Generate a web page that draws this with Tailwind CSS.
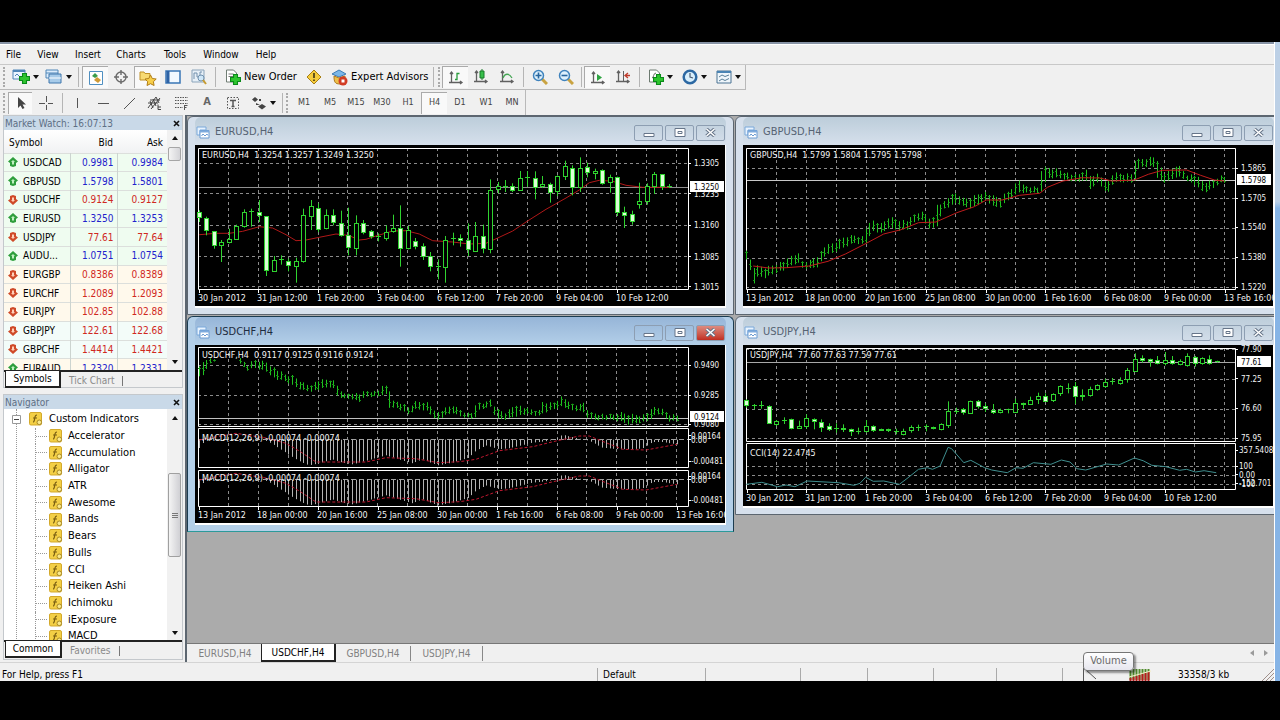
<!DOCTYPE html>
<html lang="en">
<head>
<meta charset="utf-8">
<title>Trading Terminal</title>
<script src="https://cdn.jsdelivr.net/npm/@tailwindcss/browser@4"></script>
</head>
<body class="h-screen overflow-hidden bg-black pt-[42px] pb-[39px] font-['DejaVu_Sans_Condensed','Noto_Sans',sans-serif] text-[10px] text-black">

<svg class="hidden">
  <symbol id="plus" viewBox="0 0 10 10"><path d="M3.2 .5h3.6v2.7h2.7v3.6H6.800v2.700H3.200V6.800H.5V3.200h2.700z" fill="#2fc52f" stroke="#0a8a1a"/></symbol>
  <symbol id="caret" viewBox="0 0 6 4"><path d="M0 0h6L3 4z" fill="#111"/></symbol>
  <symbol id="up" viewBox="0 0 10 10"><path d="M5 0l5 4.500-2 1.500v3l-3 1-3-1V6L0 4.500z" fill="#2e9e3c"/><path d="M5 3l2 2H6v2.500H4V5H3z" fill="#bff0c0"/></symbol>
  <symbol id="down" viewBox="0 0 10 10"><path d="M5 10L0 5.500 2 4V1l3-1 3 1v3l2 1.500z" fill="#cf4a28"/><path d="M5 7L3 5h1V2.500h2V5h1z" fill="#ffd0b8"/></symbol>
  <symbol id="fx" viewBox="0 0 14 14"><rect x=".5" y=".5" width="12" height="12.500" rx="1.500" fill="#f3cf45" stroke="#d3a92c"/><path d="M8 3c-2 0-2 1.500-2.300 3.500S5.200 10 4 10M4 6h4" fill="none" stroke="#7a5f12" stroke-width="1.200"/><circle cx="10.300" cy="10.300" r="2.300" fill="#fbe98c" stroke="#a88a28"/></symbol>
  <symbol id="win" viewBox="0 0 14 14"><path d="M1 1h9v3H4v5H1z" fill="#e8f3ff" stroke="#7ba9da"/><path d="M4 4.500h9V12H4z" fill="#fff" stroke="#6b9bd2"/><path d="M4 5.500h9" stroke="#7fabdc" stroke-width="2"/><path d="M5.500 10l1.500-2 2 2 2-2 1 1.500" fill="none" stroke="#6b9bd2"/></symbol>
  <symbol id="axes" viewBox="0 0 16 16"><path d="M3.500 2v11M1 12.500h13M2 4l1.500-2L5 4M12 11l2 1.500-2 1.500" fill="none" stroke="#606060" stroke-width="1.300"/></symbol>
</svg>

<div class="flex h-full">
<div class="flex min-w-0 flex-1 flex-col border-t-2 border-[#8793a5] bg-[#f0f0f0]">

  <nav class="flex h-5 items-center border-t border-white text-[10px]">
    <button class="w-[27px]">File</button><button class="w-[42px]">View</button><button class="w-[38px]">Insert</button><button class="w-[48px]">Charts</button><button class="w-[40px]">Tools</button><button class="w-[52px]">Window</button><button class="w-[38px]">Help</button>
  </nav>

  <div class="flex h-[26px] items-stretch border-t border-[#c8c8c8]">
   <div class="flex items-center border-r border-b border-[#b9b9b9]">
    <span class="mr-[3px] ml-[3px] h-5 w-[3px] border-l-2 border-dotted border-[#aaa]"></span>
    <button aria-label="New chart" class="flex w-8 items-center justify-center gap-[3px]"><svg class="size-[18px]" viewBox="0 0 18 18"><path d="M1 2h12v9H1z" fill="#eaf5ff" stroke="#4f86b8"/><path d="M1 3h12" stroke="#4f86b8" stroke-width="2"/><path d="M3 8l2-2 2 2" fill="none" stroke="#4f86b8"/><use href="#plus" x="7" y="5" width="11" height="11"/></svg><svg class="h-1 w-[6px]"><use href="#caret"/></svg></button>
    <button aria-label="Profiles" class="flex w-[34px] items-center justify-center gap-[3px]"><svg class="size-[18px]" viewBox="0 0 18 18"><path d="M1 2h12v8H1z" fill="#dcecfb" stroke="#4f86b8"/><path d="M1 5h12" stroke="#4f86b8"/><path d="M4 6h12v9H4z" fill="#a7cbe9" stroke="#3f76ac"/><path d="M4 10h12" stroke="#fff"/></svg><svg class="h-1 w-[6px]"><use href="#caret"/></svg></button>
    <span class="mx-[3px] h-5 border-l border-[#b5b5b5]"></span>
    <button aria-label="Market watch" class="flex h-[22px] w-[26px] items-center justify-center border-t border-l border-[#aaa] bg-[#f9f9f9]"><svg class="size-4" viewBox="0 0 16 16"><path d="M1.500 1.500h13v13h-13z" fill="#fff" stroke="#4f8fc0"/><path d="M4 6l3-3 3 3-3 2z" fill="#3a9c4a"/><path d="M6 10l3-3 4 3-3 3z" fill="#cf9a35"/></svg></button>
    <button aria-label="Data window" class="flex w-[26px] items-center justify-center"><svg class="size-4" viewBox="0 0 16 16" fill="none" stroke="#6a6a6a" stroke-width="1.400"><circle cx="8" cy="8" r="5"/><path d="M8 1v5M8 10v5M1 8h5M10 8h5"/></svg></button>
    <button aria-label="Navigator" class="flex h-[22px] w-[26px] items-center justify-center border-t border-l border-[#aaa] bg-[#f9f9f9]"><svg class="h-4 w-[18px]" viewBox="0 0 18 16"><path d="M1 2h4l1 1.500h5V10H1z" fill="#f8da72" stroke="#bf9128"/><path d="M11.500 5l1.800 3.500 3.900.500-2.800 2.700.7 3.800-3.600-1.800L8 15.500l.7-3.800L6 9l3.800-.5z" fill="#f8cf4a" stroke="#b07d18"/></svg></button>
    <button aria-label="Terminal" class="flex w-[26px] items-center justify-center"><svg class="size-4" viewBox="0 0 16 16"><path d="M1 2h14v12H1z" fill="#f2f9ff" stroke="#3875b5" stroke-width="1.500"/><path d="M3 2v12" stroke="#2d62a5" stroke-width="3"/></svg></button>
    <button aria-label="Tester" class="flex w-[26px] items-center justify-center"><svg class="size-4" viewBox="0 0 16 16"><path d="M1 1h12v12H1z" fill="#e6eff7" stroke="#8ba4ba"/><path d="M3 10V4h3v4h3V3h2" fill="none" stroke="#7390ac"/><circle cx="10" cy="9" r="3" fill="#cfe7f8" stroke="#7191ae"/><path d="M12 11l3 4" stroke="#c79c32" stroke-width="2"/></svg></button>
    <span class="mx-[3px] h-5 border-l border-[#b5b5b5]"></span>
    <button class="flex w-[82px] items-center gap-[3px] pl-[6px]"><svg class="size-4 shrink-0" viewBox="0 0 16 16"><path d="M1.500 1h7l3 3v9h-10z" fill="#fff" stroke="#707d74"/><path d="M3.500 5h5M3.500 7.500h5" stroke="#777"/><use href="#plus" x="5" y="5" width="11" height="11"/></svg><span class="text-[11px] whitespace-nowrap">New Order</span></button>
    <button aria-label="Alerts" class="flex w-[26px] items-center justify-center"><svg class="size-4" viewBox="0 0 16 16"><path d="M8 1l7 7-7 7-7-7z" fill="#f5cc3c" stroke="#a87e13"/><path d="M8 4v5M8 10.500v1.500" stroke="#3f3413" stroke-width="1.600"/></svg></button>
    <button class="flex w-[103px] items-center gap-[3px] pl-[4px]"><svg class="size-[17px] shrink-0" viewBox="0 0 17 17"><path d="M1 5l7-4 7 4-7 3z" fill="#7bb7e8" stroke="#3e7cb5"/><path d="M3 7c0 6 1 8 6 8 4 0 5-3 5-8L8 9z" fill="#efc04a" stroke="#ad7a1e"/><circle cx="12" cy="12" r="4.500" fill="#d23c25"/><path d="M10.500 10.500h3v3h-3z" fill="#fff"/></svg><span class="text-[11px] whitespace-nowrap">Expert Advisors</span></button>
    <span class="mr-[4px] ml-[3px] h-5 border-l border-[#b5b5b5]"></span><span class="mr-[1px] h-5 w-[3px] border-l-2 border-dotted border-[#aaa]"></span>
    <button aria-label="Bar chart" class="flex h-[22px] w-[26px] items-center justify-center border-t border-l border-[#aaa] bg-[#f9f9f9]"><svg class="size-4" viewBox="0 0 16 16"><use href="#axes"/><path d="M7 9.500h2V3.500h2.500M9 3v7" fill="none" stroke="#2a9c3c" stroke-width="1.300"/></svg></button>
    <button aria-label="Candlesticks" class="flex w-[26px] items-center justify-center"><svg class="size-4" viewBox="0 0 16 16"><use href="#axes"/><path d="M9 0v11" stroke="#197a29"/><path d="M7 2h4v7H7z" fill="#37bf4a" stroke="#197a29"/></svg></button>
    <button aria-label="Line chart" class="flex w-[26px] items-center justify-center"><svg class="size-4" viewBox="0 0 16 16"><use href="#axes"/><path d="M4 9c2-5 6-5 9 0" fill="none" stroke="#44a554" stroke-width="1.300"/></svg></button>
    <span class="mx-[3px] h-5 border-l border-[#b5b5b5]"></span>
    <button aria-label="Zoom in" class="flex w-[26px] items-center justify-center"><svg class="size-4" viewBox="0 0 16 16"><path d="M10 10l5 5" stroke="#c9a341" stroke-width="3"/><circle cx="6.500" cy="6.500" r="5" fill="#ddf0fc" stroke="#3f83bd" stroke-width="1.500"/><path d="M3.500 6.500h6M6.500 3.500v6" stroke="#27669f" stroke-width="1.600"/></svg></button>
    <button aria-label="Zoom out" class="flex w-[26px] items-center justify-center"><svg class="size-4" viewBox="0 0 16 16"><path d="M10 10l5 5" stroke="#c9a341" stroke-width="3"/><circle cx="6.500" cy="6.500" r="5" fill="#ddf0fc" stroke="#3f83bd" stroke-width="1.500"/><path d="M3.500 6.500h6" stroke="#27669f" stroke-width="1.600"/></svg></button>
    <span class="mx-[2px] h-5 border-l border-[#b5b5b5]"></span>
    <button aria-label="Auto scroll" class="flex h-[22px] w-[26px] items-center justify-center border-t border-l border-[#aaa] bg-[#f9f9f9]"><svg class="size-4" viewBox="0 0 16 16"><use href="#axes"/><path d="M7 4l5 3.500L7 11z" fill="#2ea441"/></svg></button>
    <button aria-label="Chart shift" class="flex w-[26px] items-center justify-center"><svg class="size-4" viewBox="0 0 16 16"><use href="#axes"/><path d="M8.500 2v10" stroke="#606060"/><path d="M15 6.500h-4M13 4l-3 2.500L13 9" fill="none" stroke="#bf3c2c" stroke-width="1.300"/></svg></button>
    <span class="mx-[3px] h-5 border-l border-[#b5b5b5]"></span>
    <button aria-label="Indicators" class="flex w-[34px] items-center justify-center gap-[3px]"><svg class="size-4" viewBox="0 0 16 16"><path d="M1.500 1h7l3 3v9h-10z" fill="#fff" stroke="#6c7a70"/><path d="M4 9c2 0 1-5 4-5" fill="none" stroke="#666"/><use href="#plus" x="5" y="5" width="11" height="11"/></svg><svg class="h-1 w-[6px]"><use href="#caret"/></svg></button>
    <button aria-label="Periods" class="flex w-[34px] items-center justify-center gap-[3px]"><svg class="size-4" viewBox="0 0 16 16"><circle cx="8" cy="8" r="6.300" fill="#d9effc" stroke="#2c68a3" stroke-width="2.500"/><path d="M8 4v4l3 1" fill="none" stroke="#4a5a70" stroke-width="1.200"/></svg><svg class="h-1 w-[6px]"><use href="#caret"/></svg></button>
    <button aria-label="Templates" class="flex w-[34px] items-center justify-center gap-[3px]"><svg class="size-4" viewBox="0 0 16 16"><path d="M1 2h14v12H1z" fill="#eff6fb" stroke="#4a7292"/><path d="M1 3h14" stroke="#4a84b4" stroke-width="2"/><path d="M3 8l3-2 3 1.500L13 6M3 12l3-2 3 1.500 4-2" fill="none" stroke="#5a7f98"/></svg><svg class="h-1 w-[6px]"><use href="#caret"/></svg></button>
   </div>
  </div>

  <div class="flex h-[25px] items-stretch">
   <div class="flex items-center border-r border-[#b9b9b9] text-[9px] text-[#444]">
    <span class="mr-[2px] ml-[3px] h-5 w-[3px] border-l-2 border-dotted border-[#aaa]"></span>
    <button aria-label="Cursor" class="flex h-[22px] w-6 items-center justify-center border-t border-l border-[#aaa] bg-[#f9f9f9]"><svg class="size-[14px]" viewBox="0 0 14 14"><path d="M4 1v11l2.500-2.500L8.500 13l2-1-2-3.500H12z" fill="#444"/></svg></button>
    <button aria-label="Crosshair" class="flex w-7 items-center justify-center"><svg class="size-4" viewBox="0 0 16 16" stroke="#555"><path d="M8.500 1v6M8.500 10v5M1 8.500h6M10 8.500h5"/></svg></button>
    <span class="mr-[1px] ml-[2px] h-5 border-l border-[#b5b5b5]"></span>
    <button aria-label="Vertical line" class="flex w-[26px] items-center justify-center"><svg class="size-4" viewBox="0 0 16 16" stroke="#555"><path d="M8.500 3v10"/></svg></button>
    <button aria-label="Horizontal line" class="flex w-[26px] items-center justify-center"><svg class="size-4" viewBox="0 0 16 16" stroke="#555"><path d="M3 8.500h11"/></svg></button>
    <button aria-label="Trendline" class="flex w-[26px] items-center justify-center"><svg class="size-4" viewBox="0 0 16 16" stroke="#555"><path d="M3 14L14 3"/></svg></button>
    <button aria-label="Channel" class="flex w-[26px] items-center justify-center"><svg class="size-4" viewBox="0 0 16 16" fill="none" stroke="#444"><path d="M1 13L9 2M4 14L13 3M1 8h10M3 5h10M6 13l-3-7M9 11L6 4M12 8L9 2M11 9.500v5h3M11 12h3"/></svg></button>
    <button aria-label="Fibonacci" class="flex w-[26px] items-center justify-center"><svg class="size-4" viewBox="0 0 16 16" fill="none" stroke="#555"><path d="M2 2.500h13M2 5.500h13M2 8.500h13M2 12.500h8" stroke-dasharray="1.500 1"/><path d="M11.500 10v5M11.500 10.500h3M11.500 12.500h2"/></svg></button>
    <button class="w-[26px] text-[11px] font-bold text-[#666]">A</button>
    <button aria-label="Text label" class="flex w-[26px] items-center justify-center"><svg class="size-4" viewBox="0 0 16 16" fill="none" stroke="#555"><path d="M2.500 2.500h11v11h-11z" stroke-dasharray="1.500 1.500"/><path d="M5 5.500h6M8 5v7M6.500 11.500h3" stroke-width="1.500"/></svg></button>
    <button aria-label="Arrows" class="flex w-[34px] items-center justify-center gap-[3px]"><svg class="size-4" viewBox="0 0 16 16" fill="#444"><path d="M4 2l3 2.500L4 7 1 4.500zM11 9l4 2.500-4 3-4-3zM8 4h2v2H8zM5 8l4 2H5z"/></svg><svg class="h-1 w-[6px]"><use href="#caret"/></svg></button>
    <span class="mr-[3px] ml-[2px] h-5 border-l border-[#b5b5b5]"></span><span class="mr-[2px] h-5 w-[3px] border-l-2 border-dotted border-[#aaa]"></span>
    <button class="w-[26px]">M1</button><button class="w-[26px]">M5</button><button class="w-[26px]">M15</button><button class="w-[26px]">M30</button><button class="w-[26px]">H1</button><button class="h-[22px] w-[26px] border-t border-l border-[#aaa] bg-[#f9f9f9]">H4</button><button class="w-[26px]">D1</button><button class="w-[26px]">W1</button><button class="w-[26px]">MN</button>
   </div>
  </div>

  <div class="flex min-h-0 flex-1">
    <aside class="flex w-[185px] shrink-0 flex-col pr-[2px] pl-[3px]">
      <section class="flex h-[273px] flex-col border border-[#c4c8cc]">
        <header class="flex h-[14px] shrink-0 items-center justify-between bg-[#c9d9e8] pr-[2px] pl-[1px] text-[10px] text-[#5d6f84]"><span>Market Watch: 16:07:13</span><button aria-label="Close" class="text-black"><svg class="size-[7px]" viewBox="0 0 7 7" stroke="#111" stroke-width="1.600"><path d="M1 1l5 5M6 1L1 6"/></svg></button></header>
        <div class="flex h-[242px] shrink-0 overflow-hidden border-b-2 border-[#222] bg-white">
          <div class="min-w-0 flex-1">
          <table class="h-[247px] w-full table-fixed border-collapse text-[10px]">
            <colgroup><col class="w-[66px]"><col class="w-[47px]"><col></colgroup>
            <thead><tr class="h-[23px] bg-linear-to-b from-white to-[#f1f2f3]"><th class="pt-[3px] pl-[5px] text-left font-normal">Symbol</th><th class="pt-[3px] pr-1 text-right font-normal">Bid</th><th class="pt-[3px] pr-1 text-right font-normal">Ask</th></tr></thead>
            <tbody id="quotes"></tbody>
          </table>
          </div>
          <div class="flex w-[15px] flex-col items-center bg-[#f1f1f1]"><svg class="mt-[6px] h-[4px] w-[6px] rotate-180"><use href="#caret"/></svg><span class="mt-[7px] h-[14px] w-[13px] rounded-xs border border-[#a6a6a6] bg-linear-to-r from-[#f4f4f4] to-[#d4d4d8]"></span><svg class="mt-auto mb-[6px] h-[4px] w-[6px]"><use href="#caret"/></svg></div>
        </div>
        <div class="flex items-start pl-[1px] text-[10px]"><button class="-mt-px h-[17px] w-[56px] border border-t-0 border-r-2 border-b-2 border-[#222] bg-white">Symbols</button><button class="h-4 pl-2 text-[#8a8a8a]">Tick Chart</button><span class="mt-1 ml-2 h-[10px] border-l border-[#777]"></span></div>
      </section>
      <section class="mt-[6px] flex flex-col border border-[#c4c8cc]">
        <header class="flex h-[14px] shrink-0 items-center justify-between bg-[#c9d9e8] pr-[2px] pl-[1px] text-[10px] text-[#5d6f84]"><span>Navigator</span><button aria-label="Close"><svg class="size-[7px]" viewBox="0 0 7 7" stroke="#111" stroke-width="1.600"><path d="M1 1l5 5M6 1L1 6"/></svg></button></header>
        <div class="flex h-[233px] shrink-0 overflow-hidden border-b-2 border-[#222] bg-white">
          <div class="min-w-0 flex-1 pl-[12px]"><div class="border-l border-dotted border-[#999]">
            <ul id="tree" class="grid h-[236px] auto-rows-fr pt-[2px] text-[11px]"></ul></div>
          </div>
          <div class="flex w-[15px] flex-col items-center bg-[#f1f1f1]"><svg class="mt-[7px] h-[4px] w-[6px] rotate-180"><use href="#caret"/></svg><span class="mt-[53px] flex h-[84px] w-[13px] flex-col items-center justify-center gap-px rounded-xs border border-[#a0a0a0] bg-linear-to-r from-[#f4f4f4] to-[#d0d0d4]"><i class="h-px w-[6px] bg-[#777]"></i><i class="h-px w-[6px] bg-[#777]"></i><i class="h-px w-[6px] bg-[#777]"></i></span><svg class="mt-auto mb-[5px] h-[4px] w-[6px]"><use href="#caret"/></svg></div>
        </div>
        <div class="flex h-[17px] items-start pl-[1px]"><button class="-mt-px h-[17px] w-[57px] border border-t-0 border-r-2 border-b-2 border-[#222] bg-white">Common</button><button class="h-4 pl-2 text-[#8a8a8a]">Favorites</button><span class="mt-1 ml-2 h-[10px] border-l border-[#777]"></span></div>
      </section>
    </aside>

    <main class="flex min-w-0 flex-1 flex-col border-t border-l-2 border-[#5c6670]">
      <div id="desk" class="relative min-h-0 flex-1 overflow-hidden bg-[#ababab]"></div>
      <div class="flex h-[19px] shrink-0 items-center border-t border-[#777] bg-[#f0f0f0] pl-[2px] text-[10px] text-[#808080]">
        <button class="w-[72px]">EURUSD,H4</button><button class="h-[18px] w-[75px] border border-t-0 border-r-2 border-b-2 border-[#222] bg-white text-black">USDCHF,H4</button><button class="w-[75px] border-r border-[#888]">GBPUSD,H4</button><button class="w-[72px] border-r border-[#888]">USDJPY,H4</button>
        <span class="ml-auto flex gap-[10px] pr-[6px]"><svg class="h-[6px] w-1" viewBox="0 0 4 6"><path d="M4 0v6L0 3z" fill="#9a9a9a"/></svg><svg class="h-[6px] w-1" viewBox="0 0 4 6"><path d="M0 0v6l4-3z" fill="#9a9a9a"/></svg></span>
      </div>
    </main>
  </div>

  <footer class="flex h-[19px] shrink-0 items-stretch border-t border-[#d4d4d4] pt-[5px] leading-[13px]">
    <span class="flex-1 pl-[2px]">For Help, press F1</span>
    <span class="w-[108px] border-l border-[#aaa] pl-[5px]">Default</span>
    <span class="w-[95px] border-l border-[#aaa]"></span><span class="w-[67px] border-l border-[#aaa]"></span><span class="w-[66px] border-l border-[#aaa]"></span><span class="w-[63px] border-l border-[#aaa]"></span><span class="w-[66px] border-l border-[#aaa]"></span>
    <div class="relative flex w-[212px] border-l border-[#aaa]">
      <svg class="ml-[20px] h-[13px] w-[40px] shrink-0" viewBox="0 0 40 13"><path d="M.5 0v13M2 1l11 10" fill="none" stroke="#555"/></svg>
      <svg class="ml-[6px] h-[13px] w-[23px] shrink-0" viewBox="0 0 23 13"><path d="M1.500 1v11M4.500 1v11M7.500 1v11M10.500 1v11M13.500 1v11M16.500 1v11M19.500 1v11" stroke="#4f8a2a" stroke-width="2"/><path d="M1.500 10v3M4.500 9v4M7.500 8v5M10.500 7v6M13.500 6v7M16.500 5v8M19.500 4v9" stroke="#b81c1c" stroke-width="2"/><path d="M0 9l22-6" stroke="#f3edc0"/></svg>
      <span class="ml-[26px] whitespace-nowrap">33358/3 kb</span>
      <svg class="mt-auto ml-auto size-3" viewBox="0 0 12 12" stroke="#a08f8a"><path d="M0 12L12 0M4 12l8-8M8 12l4-4"/></svg>
      <div role="tooltip" class="absolute -top-[16px] left-5 h-[19px] w-[51px] rounded-sm border border-[#767676] bg-linear-to-b from-white to-[#e6e6ee] text-center text-[11px] leading-[16px] text-[#6a6a6a] shadow-[2px_2px_2px_rgba(0,0,0,0.4)]">Volume</div>
    </div>
  </footer>
</div>
<div class="w-[6px] border-l border-white bg-linear-to-b from-[#bcd0e6] from-25% to-[#86b4e6] to-26%"></div>
</div>

<script>
const quotes = [["USDCAD","0.9981","0.9984",1],["GBPUSD","1.5798","1.5801",1],["USDCHF","0.9124","0.9127",0],["EURUSD","1.3250","1.3253",1],["USDJPY","77.61","77.64",0],["AUDU...","1.0751","1.0754",1],["EURGBP","0.8386","0.8389",0],["EURCHF","1.2089","1.2093",0],["EURJPY","102.85","102.88",0],["GBPJPY","122.61","122.68",0],["GBPCHF","1.4414","1.4421",0],["EURAUD","1.2320","1.2331",1]];
document.getElementById("quotes").innerHTML = quotes.map(([s,b,a,u],i)=>{
  const bg = i<6 ? "bg-[#effcf0]" : i<9 || i==11 ? "bg-[#fff9ec]" : "bg-[#f3fcf9]";
  const c = u ? "text-[#2222cc]" : "text-[#d0281e]";
  return `<tr class="${bg} border-t border-[#dcdfdc]"><td class="border-r border-[#ccd4d0] p-0"><span class="flex items-center gap-[5px] pl-[4px]"><svg class="size-[10px] shrink-0"><use href="#${u?"up":"down"}"/></svg>${s}</span></td><td class="border-r border-[#ccd4d0] p-0 pr-[3px] text-right ${c}">${b}</td><td class="p-0 pr-1 text-right ${c}">${a}</td></tr>`;
}).join("");

document.getElementById("tree").innerHTML = ["Custom Indicators","Accelerator","Accumulation","Alligator","ATR","Awesome","Bands","Bears","Bulls","CCI","Heiken Ashi","Ichimoku","iExposure","MACD"].map((t,i)=> i==0
  ? `<li class="-ml-[5px] flex items-center"><svg class="size-[9px]" viewBox="0 0 9 9"><path d="M.5.500h8v8h-8z" fill="#fff" stroke="#999"/><path d="M2 4.500h5" stroke="#444"/></svg><svg class="ml-[8px] size-[14px]"><use href="#fx"/></svg><span class="ml-[6px] whitespace-nowrap">${t}</span></li>`
  : `<li class="ml-[18px] flex items-center border-l border-dotted border-[#999]"><span class="w-[11px] border-t border-dotted border-[#999]"></span><svg class="ml-[2px] size-[14px]"><use href="#fx"/></svg><span class="ml-[5px] whitespace-nowrap">${t}</span></li>`).join("");

/* Chart drawing. Horizontal data values are divided by kx and vertical ones by 3 to give pixels from the window's corner. */
const line=(x1,y1,x2,y2,s,extra="")=>`<path d="M${x1} ${y1}L${x2} ${y2}" stroke="${s}" ${extra} fill="none"/>`;
const snap=v=>Math.floor(v)+0.5;
const label=(x,y,t,fill="#f4f4f4")=>`<text x="${x}" y="${y}" fill="${fill}">${t}</text>`;
const wide=(x,y,t)=>`<text x="${x}" y="${y}" fill="#f4f4f4" font-family="DejaVu Sans" style="white-space:pre">${t}</text>`;
const DASH='stroke-dasharray="3 3"';
function at(points,x){
  let i=1; while(i<points.length-1 && points[i][0]<x) i++;
  const a=points[i-1], b=points[i], f=Math.max(0,Math.min(1,(x-a[0])/(b[0]-a[0]||1)));
  return a.slice(1).map((v,j)=>v+(b[j+1]-v)*f);
}
function frame(panels,grid,right){
  let s="";
  const top=panels[0][0], bottom=panels[panels.length-1][1];
  for(let i=1;i<=16;i++){ const x=snap(12.6+29.87*i); if(x<right) s+=line(x,top,x,bottom,"#8b8b8b",DASH); }
  for(const y of grid) s+=line(12,snap(y),right,snap(y),"#8b8b8b",DASH);
  for(const [a,b] of panels) s+=`<path d="M12.500 ${snap(a)}H${right+.5}V${snap(b)}H12.500z" fill="none" stroke="#fff"/>`;
  return s;
}
function dates(list,y){ return list.map((t,i)=>{const x=Math.round(12.6+59.74*i);return line(x+.5,y-10,x+.5,y-6,"#fff")+wide(x-1,y+2,t);}).join(""); }
function axis(list,right,dx=6){ return list.map(([v,t])=>line(right,snap(v/3),right+3,snap(v/3),"#fff")+label(right+dx,Math.round(v/3)+3,t)).join(""); }
function tag(y,t,right){ return `<rect x="${right+2}" y="${y-6}" width="34" height="11" fill="#fff"/>`+label(right+6,y+3,t,"#000"); }
function poly(points,kx,stroke,extra=""){ return `<path d="M${points.map(p=>(p[0]/kx).toFixed(1)+" "+(p[1]/3).toFixed(1)).join("L")}" fill="none" stroke="${stroke}" ${extra}/>`; }
function candles(text,x0,step,kx){
  return text.trim().split(/\s+/).map((c,i)=>{
    const m=c.match(/^([\d,]+)([fhd])$/), [hi,t,b,lo]=m[1].split(",").map(v=>v/3), x=snap((x0+step*i)/kx);
    let s=line(x,hi,x,lo,"#2fd32f");
    if(m[2]=="d") s+=line(x-2.5,snap(t),x+2.5,snap(t),"#2fd32f");
    else s+=`<rect x="${x-2}" y="${snap(t)}" width="4" height="${Math.max(1,Math.round(b-t))}" fill="${m[2]=="f"?"#dcffd6":"#000"}" stroke="#2fd32f"/>`;
    return s;
  }).join("");
}
function bars(points,x0,step,n,kx,skip=()=>false){
  let s="";
  for(let i=0;i<n;i++){
    const cx=x0+step*i; if(skip(cx)) continue;
    let [h,l]=at(points,cx); const w=((i*37)%11-5)/11*8, x=snap(cx/kx);
    h=(h+w)/3; l=(l+w*.6)/3;
    const o=snap(h+(l-h)*(((i*7)%5+1)/6)), c=snap(h+(l-h)*(((i*3)%5+1)/6));
    s+=line(x,h,x,l,"#1fc41f")+line(x-1.5,o,x,o,"#168a16")+line(x,c,x+1.500,c,"#168a16");
  }
  return s;
}
const P=t=>t.trim().split(/\s+/).map(p=>p.split(/[:,]/).map(Number));

const K=2.872;
const eur = frame([[32,173]],[47,77,109,140,170],502)+line(13,71.5,502,71.5,"#8f8f8f")
 +poly(P("40,356 90,352 130,352 170,346 220,332 260,336 300,356 330,374 360,372 400,364 450,354 487,358 520,372 540,370 570,360 620,345 660,344 700,354 740,374 800,378 850,384 900,382 935,366 980,345 1020,318 1080,280 1140,246 1180,222 1210,200 1240,193 1280,196 1320,208 1370,214 1450,214"),3,"#b01818")
 +candles("283,290,305,318f 302,308,345,358f 345,346,388,398f 372,378,388,438h 338,369,378,382h 326,330,368,370h 280,288,330,335h 278,286,288,332d 252,290,298,318f 300,302,465,480f 420,432,466,468h 418,431,433,446d 428,436,448,466f 425,436,450,500h 278,298,436,440h 252,272,302,342h 262,276,340,348f 280,298,338,340h 280,298,320,328f 284,322,357,362f 275,358,395,418f 298,322,397,418h 312,322,348,355f 342,346,362,368f 352,362,364,376d 328,348,366,374h 296,338,348,350h 268,336,397,452f 330,344,397,400h 366,376,390,400f 382,392,422,432f 408,422,453,466f 430,450,453,490d 360,372,452,500h 350,366,369,388d 355,367,373,392f 322,374,402,420f 318,360,405,408h 326,360,397,412f 190,222,400,412h 198,212,220,232h 192,210,213,228d 202,210,222,228f 165,186,222,225h 165,183,186,212d 166,186,212,250f 180,206,213,216h 200,204,228,260f 178,182,228,240h 134,152,182,192h 148,156,212,238f 124,156,212,228h 140,154,170,184f 158,166,172,190h 160,164,202,206f 176,184,198,230h 182,184,288,300f 272,288,296,336f 284,294,314,326f 200,256,264,278h 202,212,258,266h 168,176,212,234h 174,176,212,222f 204,210,212,216d",40,22.4,3)
 +wide(16,42,"EURUSD,H4  1.3254 1.3257 1.3249 1.3250")
 +axis([[142,"1.3305"],[233,"1.3235"],[327,"1.3160"],[422,"1.3085"],[512,"1.3015"]],502)+tag(71,"1.3250",502)
 +dates(["30 Jan 2012","31 Jan 12:00","1 Feb 20:00","3 Feb 04:00","6 Feb 12:00","7 Feb 20:00","9 Feb 04:00","10 Feb 12:00"],183);

const gbp = frame([[32,173]],[52,82,112,142,171],501)+line(13,64.5,501,64.5,"#c8c8c8")
 +bars(P("35:405,430 46:430,460 58:455,503 70:450,480 90:455,485 112:448,474 130:440,465 150:435,462 165:420,448 185:412,440 195:436,455 215:436,458 240:420,452 262:392,420 290:380,408 320:362,392 345:358,380 370:362,384 380:335,380 400:314,345 425:325,352 445:303,335 475:312,342 500:315,340 525:290,312 545:290,315 565:308,340 575:305,335 584:262,330 600:262,280 620:240,272 640:232,260 660:250,272 680:245,275 700:235,268 720:228,250 745:242,272 765:245,274 790:225,250 820:192,228 840:212,230 875:216,232 885:155,224 900:155,186 930:160,185 955:170,190 985:180,200 1010:160,190 1022:180,220 1045:175,200 1075:200,232 1090:172,200 1120:175,198 1142:175,200 1152:132,192 1165:130,152 1205:122,150 1217:140,190 1240:175,200 1275:145,180 1300:175,192 1325:178,208 1350:200,230 1375:195,218 1395:180,200 1408:182,200"),36,10.73,129,K)
 +poly(P("55,450 100,456 150,455 215,450 270,436 320,414 380,382 430,354 480,341 530,320 580,318 640,290 690,272 725,252 770,252 820,238 878,232 900,214 945,195 1000,185 1050,186 1085,195 1150,192 1190,175 1230,163 1300,162 1340,178 1380,192 1408,195"),K,"#c01c1c")
 +wide(16,42,"GBPUSD,H4  1.5799 1.5804 1.5795 1.5798")
 +axis([[156,"1.5865"],[246,"1.5705"],[334,"1.5540"],[424,"1.5380"],[513,"1.5220"]],501)+tag(64,"1.5798",501)
 +dates(["13 Jan 2012","18 Jan 00:00","20 Jan 16:00","25 Jan 08:00","30 Jan 00:00","1 Feb 16:00","6 Feb 08:00","9 Feb 00:00","13 Feb 16:00"],183);

const hist=P("40:396 52:380 62:371 230:371 245:376 270:390 300:410 340:435 370:448 400:442 440:430 470:440 500:445 550:432 600:418 640:430 680:442 710:430 756:448 800:440 850:425 870:405 900:388 940:400 975:396 1040:380 1080:376 1110:370 1130:356 1180:368 1210:374 1250:395 1300:400 1370:398 1400:378 1430:378 1473:385");
const sig=P("40,372 150,352 240,366 300,382 340,405 390,438 430,438 540,438 600,425 690,428 756,440 820,437 870,430 940,404 1040,392 1110,375 1180,360 1210,360 1260,380 1310,400 1380,402 1473,385");
function macd(dy){
  let s=line(13,snap((371+dy)/3),502,snap((371+dy)/3),"#a0a0a0",'stroke-dasharray="5 3"');
  for(let i=0;i<129;i++){ const cx=40+11.2*i, x=snap(cx/3); s+=line(x,(371+dy)/3,x,(at(hist,cx)[0]+dy)/3,"#b4b4b4"); }
  return s+poly(sig.map(p=>[p[0],p[1]+dy]),3,"#c01830",'stroke-dasharray="3 2"')+wide(16,Math.round((371+dy)/3)+1,"MACD(12,26,9) -0.00074 -0.00074");
}
const chf = frame([[31,110],[112,151],[154,190]],[49,79,108],502)+line(13,102.5,502,102.5,"#c0c0c0")
 +bars(P("40:155,183 50:140,180 62:130,158 80:130,136 165:130,145 185:148,163 205:132,155 240:138,165 270:160,190 300:178,196 320:180,208 350:200,222 370:208,226 395:195,222 420:192,215 440:192,212 455:210,240 475:235,248 500:230,248 520:235,258 540:226,242 575:228,242 590:205,235 606:215,235 611:225,275 625:256,272 650:264,285 667:275,295 690:258,280 720:258,282 740:275,300 756:290,312 775:280,300 800:268,290 820:280,300 845:292,305 864:290,308 870:258,300 882:262,278 900:262,278 915:250,272 930:280,308 960:290,310 990:265,300 1020:278,295 1060:285,300 1070:258,292 1100:262,280 1130:240,270 1150:262,282 1180:268,285 1198:258,290 1208:290,310 1280:298,312 1300:290,315 1330:295,325 1370:298,318 1400:280,310 1410:270,290 1430:282,300 1450:295,315 1473:298,315"),40,11.2,129,3,x=>x>85&&x<162)
 +macd(0)+macd(120)
 +wide(16,42,"USDCHF,H4  0.9117 0.9125 0.9116 0.9124")
 +axis([[147,"0.9490"],[237,"0.9285"],[325,"0.9080"]],502)+axis([[359,"0.00164"],[371,"0.00"],[436,"-0.00481"],[481,"0.00164"],[491,"0.00"],[553,"-0.00481"]],502,3)+tag(101,"0.9124",502)
 +dates(["13 Jan 2012","18 Jan 00:00","20 Jan 16:00","25 Jan 08:00","30 Jan 00:00","1 Feb 16:00","6 Feb 08:00","9 Feb 00:00","13 Feb 16:00"],200);

const jpy = frame([[32,125],[127,173]],[33,63,93,122,150,159,168],501)+line(13,46.5,501,46.5,"#a8a8a8")
 +candles("250,254,270,275f 264,267,269,280d 255,267,269,278d 268,270,321,324f 312,315,325,330h 304,313,316,324d 308,310,337,340f 314,330,336,338h 295,307,332,338h 307,309,314,340f 310,318,332,348f 322,332,340,345f 322,337,339,350d 325,337,341,348f 338,340,347,360f 335,345,348,355d 312,332,346,350h 328,332,345,348f 338,340,344,345f 338,341,345,348f 338,345,348,355d 338,345,353,358h 328,334,343,350h 326,333,336,345d 325,330,333,346d 332,334,338,340f 322,326,340,343h 256,287,328,336h 275,285,287,294d 276,280,290,296f 254,256,292,294h 252,256,270,278f 262,270,275,288f 264,282,288,294f 278,282,287,292h 278,281,285,292d 248,262,288,290h 260,263,266,278f 242,252,264,266h 230,242,250,264h 232,240,254,256f 232,236,255,258h 208,212,234,240h 202,217,219,232d 198,212,242,264f 220,237,241,254h 212,220,238,242h 205,209,222,224h 188,200,212,216h 186,196,200,206d 184,192,200,206h 156,164,192,200h 112,130,166,168h 118,128,133,140f 128,130,136,152f 120,132,142,145f 108,132,142,148h 120,134,144,146f 130,136,145,148h 112,122,148,152h 120,124,143,152f 124,128,142,146h 118,130,142,146f 134,137,139,140d",37,21.45,K)
 +poly(P("35,505 80,499 125,512 150,507 175,512 210,495 300,500 345,508 362,502 378,484 400,496 430,495 475,505 500,485 530,460 555,455 570,460 592,450 615,394 625,398 660,440 680,433 720,455 740,462 785,470 810,455 830,457 860,440 910,445 940,432 965,438 985,458 1010,462 1070,444 1105,447 1150,426 1175,434 1200,448 1240,452 1280,463 1300,460 1325,468 1350,464 1385,470"),K,"#3f8f8f")
 +wide(16,42,"USDJPY,H4  77.60 77.63 77.59 77.61")+wide(16,140,"CCI(14) 22.4745")
 +axis([[99,"77.90"],[188,"77.25"],[277,"76.60"],[367,"75.95"]],501)+axis([[402,"357.5408"],[451,"100"],[476,"0.00"],[503,"-100"],[502,"-152.701"]],501,4)+tag(46,"77.61",501)
 +dates(["30 Jan 2012","31 Jan 12:00","1 Feb 20:00","3 Feb 04:00","6 Feb 12:00","7 Feb 20:00","9 Feb 04:00","10 Feb 12:00"],183);

const ctl="flex h-4 w-[29px] items-center justify-center rounded-xs border border-[#8d9eb2]";
function mdi(title,pos,chart,h,on){
  return `<section class="absolute ${pos} flex w-[547px] flex-col rounded-t-md border ${on?"border-[#1c3c50] bg-[#b3cfe8] border-b-[#2c9a9a]":"border-[#5c6670] bg-[#d6e0ec]"} pr-[7px] pb-[6px] pl-[7px]">
   <header class="flex h-[28px] shrink-0 items-center rounded-t-md pt-[3px] pr-px text-[11px] ${on?"bg-linear-to-b from-[#96b5d8] to-[#b3cfe8] text-[#1e2c40]":"bg-linear-to-b from-[#bccdda] to-[#d6e0ec] text-[#566373]"}">
    <svg class="mr-[5px] ml-[1px] size-[14px]"><use href="#win"/></svg><h2 class="flex-1">${title}</h2>
    <div class="flex gap-[2px]"><button aria-label="Minimize" class="${ctl}"><svg class="h-2 w-3" viewBox="0 0 12 8"><path d="M1 4.500h10v3H1z" fill="#fff" stroke="#667589"/></svg></button><button aria-label="Restore" class="${ctl}"><svg class="h-[9px] w-3" viewBox="0 0 12 9"><path d="M1 .5h10v8H1z" fill="#fff" stroke="#667589"/><path d="M4 3.500h4v2H4z" fill="none" stroke="#667589"/></svg></button><button aria-label="Close" class="${ctl} ${on?"bg-linear-to-b from-[#dc8a80] to-[#c02c20]":""}"><svg class="h-[9px] w-[11px]" viewBox="0 0 11 9"><path d="M1.500 1l8 7M9.500 1l-8 7" stroke="#667589" stroke-width="3.500"/><path d="M1.500 1l8 7M9.500 1l-8 7" stroke="#fff" stroke-width="1.500"/></svg></button></div>
   </header>
   <div class="border-r border-b-2 border-white bg-black"><svg class="block w-full font-['DejaVu_Sans_Condensed','Noto_Sans',sans-serif]" height="${h}" viewBox="9 29 530 ${h}" preserveAspectRatio="xMinYMin slice" font-size="8">${chart}</svg></div>
  </section>`;
}
document.getElementById("desk").innerHTML =
  mdi("EURUSD,H4","top-0 left-0",eur,161,false)+mdi("GBPUSD,H4","top-0 left-[548px]",gbp,161,false)
 +mdi("USDJPY,H4","top-[200px] left-[548px]",jpy,161,false)+mdi("USDCHF,H4","top-[200px] left-0",chf,178,true);
</script>
</body>
</html>
